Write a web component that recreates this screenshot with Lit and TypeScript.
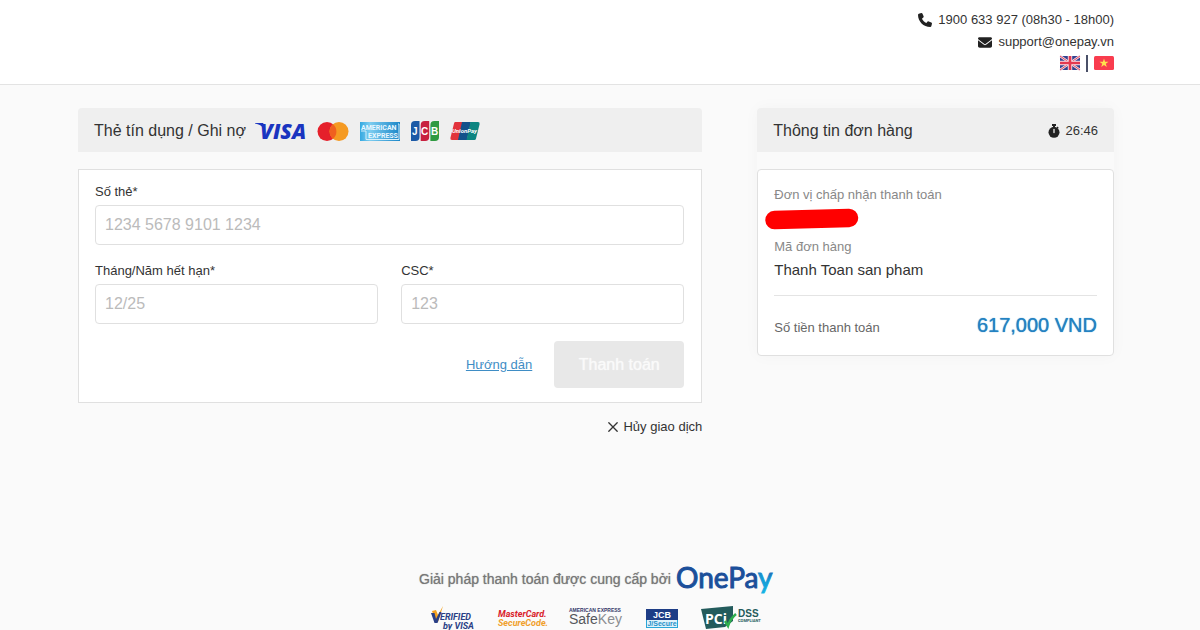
import { LitElement, html, css } from "lit";
import { customElement, property } from "lit/decorators.js";

const phoneIcon = html`<svg width="14" height="14" viewBox="0 0 512 512" aria-hidden="true"><path fill="#222" d="M164.900 24.600c-7.700-18.600-28-28.500-47.400-23.200l-88 24C12.100 30.200 0 46 0 64c0 247.400 200.600 448 448 448 18 0 33.800-12.100 38.600-29.500l24-88c5.300-19.400-4.600-39.700-23.200-47.400l-96-40c-16.300-6.800-35.200-2.100-46.300 11.600L304.700 368C234.300 334.700 177.300 277.700 144 207.300l49.300-40.300c13.700-11.200 18.400-30 11.600-46.300z"/></svg>`;

const mailIcon = html`<svg width="14" height="11" viewBox="0 0 512 384" aria-hidden="true"><path fill="#222" d="M48 0C21.500 0 0 21.500 0 48c0 15.100 7.100 29.300 19.200 38.400l217.600 163.200c11.400 8.500 27 8.500 38.400 0L492.800 86.400C504.900 77.300 512 63.100 512 48c0-26.500-21.500-48-48-48zM0 112v208c0 35.300 28.700 64 64 64h384c35.300 0 64-28.700 64-64V112L294.400 275.200c-22.800 17.100-54 17.100-76.800 0z"/></svg>`;

const watchIcon = html`<svg width="12" height="14" viewBox="0 0 12 14" aria-hidden="true"><path fill="#222" d="M4 0h4v2H7v1h-2V2H4zM9.500 2.600l1.200 1.200-1 1-1.200-1.200z"/><circle cx="6" cy="8.300" r="5.500" fill="#222"/><path stroke="#eee" stroke-width="1.300" stroke-linecap="round" d="M6 5.500v3"/></svg>`;

const closeIcon = html`<svg width="10" height="10" viewBox="0 0 10 10" aria-hidden="true"><path stroke="#333" stroke-width="1.300" stroke-linecap="round" d="M.8.800l8.400 8.400M9.200.800L.8 9.200"/></svg>`;

const ukFlag = html`<svg width="20" height="14" viewBox="0 0 20 14" aria-hidden="true">
  <rect width="20" height="14" rx="1" fill="#34418f"/>
  <path d="M0 0l20 14M20 0L0 14" stroke="#f3dfe8" stroke-width="2.400"/>
  <path d="M0 0l20 14M20 0L0 14" stroke="#e5485d" stroke-width="1"/>
  <path d="M10 0v14M0 7h20" stroke="#f6e4ec" stroke-width="4.400"/>
  <path d="M10 0v14M0 7h20" stroke="#e5374f" stroke-width="2.600"/>
</svg>`;

const vnFlag = html`<svg width="20" height="14" viewBox="0 0 20 14" aria-hidden="true">
  <rect width="20" height="14" rx="1.500" fill="#f93c4e"/>
  <path fill="#ffe04d" d="M10 2.500l1.100 3.300h3.400l-2.700 2 1 3.300L10 9.100l-2.800 2 1-3.300-2.700-2h3.400z"/>
</svg>`;

const cardBrands = [
  html`<svg width="49" height="20" viewBox="0 0 49 20" role="img" aria-label="Visa">
    <path fill="#1a34c0" d="M-2 2h8l2 3L7 8C5 5 2 3 -2 2.500z"/>
    <text class="visa" x="3" y="18">VISA</text>
  </svg>`,
  html`<svg width="32" height="20" viewBox="0 0 32 20" role="img" aria-label="Mastercard">
    <circle cx="10" cy="10.500" r="9.500" fill="#e5202b"/><circle cx="22" cy="10.500" r="9.500" fill="#f59a22"/>
    <path fill="#f0601f" d="M16 3.200a9.500 9.500 0 0 1 0 14.600a9.500 9.500 0 0 1 0-14.600z"/>
  </svg>`,
  html`<svg width="40" height="20" viewBox="0 0 40 20" role="img" aria-label="American Express">
    <defs><linearGradient id="amex" x1="0" y1="0" x2="1" y2="0"><stop offset="0" stop-color="#35a8e0"/><stop offset=".25" stop-color="#7dcdf0"/><stop offset="1" stop-color="#1b86c8"/></linearGradient></defs>
    <rect y="1" width="40" height="19" fill="url(#amex)"/>
    <path fill="none" stroke="#d6effa" d="M1 10h5v8.500h33V3h-1"/>
    <text class="amex" x="1" y="9">AMERICAN</text><text class="amex" x="8" y="17">EXPRESS</text>
  </svg>`,
  html`<svg width="28" height="20" viewBox="0 0 28 20" role="img" aria-label="JCB">
    <path fill="#1c5aa6" d="M4 0h4.500v16a4 4 0 0 1-4 4H0V4a4 4 0 0 1 4-4z"/>
    <path fill="#c8203f" d="M13.700 0h4.500v16a4 4 0 0 1-4 4H9.700V4a4 4 0 0 1 4-4z"/>
    <path fill="#2f9a41" d="M23.400 0H28v16a4 4 0 0 1-4 4h-4.600V4a4 4 0 0 1 4-4z"/>
    <text class="jcb" x="1" y="14">J</text><text class="jcb" x="10" y="14">C</text><text class="jcb" x="20" y="14">B</text>
  </svg>`,
  html`<svg width="30" height="20" viewBox="0 0 30 20" role="img" aria-label="UnionPay">
    <path fill="#e2333c" d="M5 1h9l-4 18H2q-2 0-1.600-2L4 2.500Q4.300 1 5 1z"/>
    <path fill="#12518b" d="M12 1h9l-4 18H8z"/>
    <path fill="#0c8581" d="M20.500 1H28q2 0 1.600 2L26 17.500q-.4 1.500-1.500 1.500h-8z"/>
    <text class="union" x="2" y="12">UnionPay</text>
  </svg>`,
];

const onePayLogo = html`<svg width="97" height="34" viewBox="0 0 97 34" role="img" aria-label="OnePay">
  <defs><linearGradient id="tail" gradientUnits="userSpaceOnUse" x1="82" y1="31" x2="94" y2="9"><stop offset="0" stop-color="#14b8e8"/><stop offset=".6" stop-color="#149ad4"/><stop offset="1" stop-color="#1b6fb8"/></linearGradient></defs>
  <text class="onepay" x="0" y="26">OnePa<tspan class="tail">y</tspan></text>
</svg>`;

const securityLogos = [
  html`<svg width="44" height="24" viewBox="0 0 44 24" role="img" aria-label="Verified by Visa">
    <path fill="#f4a11f" d="M1 5l4-1 2 5L12 0 7 16H5z"/>
    <path fill="#2a3f86" d="M0 7h3.500l1.500 6 3.500-7h2L6.500 17H3.500z"/>
    <text class="verified" x="9" y="14">ERIFIED</text><text class="verified" x="12" y="23">by VISA</text>
  </svg>`,
  html`<svg width="48" height="24" viewBox="0 0 48 24" role="img" aria-label="MasterCard SecureCode">
    <text class="mc red" x="0" y="11">MasterCard.</text><text class="mc gold" x="0" y="20">SecureCode.</text>
  </svg>`,
  html`<svg width="54" height="24" viewBox="0 0 54 24" role="img" aria-label="American Express SafeKey">
    <text class="tiny" x="0" y="6">AMERICAN EXPRESS</text>
    <text class="safekey" x="0" y="18">Safe<tspan fill="#8b8d91">Key</tspan></text>
  </svg>`,
  html`<svg width="32" height="24" viewBox="0 0 32 24" role="img" aria-label="JCB J/Secure">
    <rect y="3" width="32" height="19" fill="#2aa6d8"/><rect y="3" width="32" height="11" fill="#1e3d86"/><rect x="1" y="14" width="30" height="7" fill="#dff3fb"/>
    <text class="jcb-title" x="16" y="12" text-anchor="middle">JCB</text><text class="jsecure" x="16" y="20" text-anchor="middle">J/Secure</text>
  </svg>`,
  html`<svg width="60" height="24" viewBox="0 0 60 24" role="img" aria-label="PCI DSS compliant">
    <path fill="#235b5c" d="M0 3l32-3v15l-8 6-19 2z"/>
    <text class="pci" x="4" y="18">PCi</text>
    <path d="M24 15l3 5Q29 13 35 8" fill="none" stroke="#2fae4d" stroke-width="2.500"/>
    <text class="dss" x="37" y="11">DSS</text><text class="compliant" x="37" y="16">COMPLIANT</text>
  </svg>`,
];

@customElement("pay-field")
class PayField extends LitElement {
  static styles = css`
    :host { display: block; flex: 1; min-width: 0; }
    .label { display: block; margin-bottom: 3px; padding-top: 1px; font-size: 13px; line-height: 20px; color: #333; }
    .input { box-sizing: border-box; display: block; width: 100%; height: 40px; padding: 0 9px; border: 1px solid #e0e0e0; border-radius: 4px; background: #fff; color: #333; font: 16px "Liberation Sans", Arial, sans-serif; }
    .input::placeholder { color: #bbb; opacity: 1; }
  `;
  @property() label = "";
  @property() hint = "";
  render() {
    return html`<label class="label" for="field">${this.label}</label>
      <input class="input" id="field" type="text" inputmode="numeric" placeholder=${this.hint} />`;
  }
}

@customElement("app-root")
class AppRoot extends LitElement {
  static styles = css`
    :host { display: flex; flex-direction: column; min-height: 100vh; background: #fafafa; color: #333; font: 13px/20px "Liberation Sans", Arial, sans-serif; }
    svg { display: block; flex: none; overflow: visible; }
    .top { padding: 0 8px 0 0; background: #fff; border-bottom: 1px solid #e3e3e3; }
    .wrap { box-sizing: border-box; width: 100%; max-width: 1036px; margin: 0 auto; }
    .contact { display: flex; flex-direction: column; align-items: flex-end; gap: 2px; padding: 10px 0 12px; }
    .line { display: flex; align-items: center; gap: 6px; color: #333; text-decoration: none; }
    .langs { display: flex; align-items: center; gap: 6px; height: 18px; }
    .lang { padding: 0; border: 0; background: none; }
    .bar { width: 2px; height: 17px; background: #4a5068; }
    .main { flex: 1; padding: 23px 8px 24px 0; }
    .columns { display: grid; grid-template-columns: minmax(0, 7fr) minmax(0, 4fr); gap: 55px; align-items: start; }
    .heading { display: flex; align-items: center; gap: 11px; box-sizing: border-box; height: 44px; margin-bottom: 17px; padding: 2px 16px 0; border-radius: 4px 4px 0 0; background: #efefef; }
    .title { margin: 0; font-size: 16px; font-weight: 400; }
    .timer { display: flex; align-items: center; gap: 5px; margin-left: auto; }
    .card { padding: 11px 17px 14px 16px; border: 1px solid #e0e0e0; background: #fff; }
    .form { display: flex; flex-direction: column; gap: 15px; margin: 0; }
    .pair { display: flex; gap: 23px; }
    .actions { display: flex; justify-content: flex-end; align-items: center; gap: 22px; padding-top: 2px; }
    .guide { color: #3f8dc5; }
    .pay { width: 130px; height: 47px; border: 0; border-radius: 4px; background: #e8e8e8; color: #fafafa; font: 16px "Liberation Sans", Arial, sans-serif; text-shadow: 0 0 1px #fafafa; }
    .cancel { display: flex; align-items: center; gap: 5px; margin: 14px 0 0 auto; padding: 0; border: 0; background: none; color: #333; font: 13px/20px "Liberation Sans", Arial, sans-serif; }
    .order { border-radius: 4px; box-shadow: 0 0 16px rgba(0, 0, 0, 0.03); }
    .summary { padding: 15px 16px; border-radius: 4px; }
    .muted { margin: 0; color: #888; }
    .merchant { margin: 3px 0 7px -10px; }
    .item { margin: 3px 0 0; padding-bottom: 15px; border-bottom: 1px solid #e4e4e4; font-size: 15px; }
    .total { display: flex; justify-content: space-between; align-items: baseline; padding: 17px 0 2px; color: #666; }
    .amount { color: #2482c2; font-size: 20px; line-height: 24px; text-shadow: 0 0 1px #2482c2; }
    .footer { display: flex; flex-direction: column; align-items: center; gap: 10px; padding-right: 8px; }
    .provider { display: flex; align-items: center; gap: 5px; color: #777; font-size: 14px; text-shadow: 0 0 1px #999; }
    .badges { display: flex; gap: 23px; }

    .visa { font: italic 800 21px "Open Sans", sans-serif; fill: #1a34c0; }
    .amex { font: 700 7px Roboto, sans-serif; fill: #e9f7ff; }
    .jcb { font: 700 10px "Liberation Sans", sans-serif; fill: #fff; }
    .union { font: italic 700 6px Roboto, sans-serif; fill: #fff; }
    .onepay { font: 400 28px Lato, sans-serif; fill: #1b4f9a; stroke: #1b4f9a; stroke-width: 1px; text-shadow: none; }
    .tail { fill: url(#tail); stroke: url(#tail); }
    .verified { font: italic 700 9px Roboto, sans-serif; fill: #2a3f86; }
    .mc { font: italic 700 9px Roboto, sans-serif; }
    .red { fill: #d9222a; }
    .gold { fill: #f0a02c; }
    .tiny { font: 700 5px "Liberation Sans", sans-serif; fill: #34386a; }
    .safekey { font: 14px "Liberation Sans", sans-serif; fill: #55575c; }
    .jcb-title { font: 700 9px "Liberation Sans", sans-serif; fill: #fff; }
    .jsecure { font: 700 7px "Liberation Sans", sans-serif; fill: #2590c8; }
    .pci { font: 700 14px "Open Sans", sans-serif; fill: #fff; }
    .dss { font: 700 10px "Liberation Sans", sans-serif; fill: #235b5c; }
    .compliant { font: 700 4px Roboto, sans-serif; fill: #235b5c; }
    @media (max-width: 800px) {
      .columns { grid-template-columns: minmax(0, 1fr); gap: 24px; }
    }
  `;

  render() {
    return html`
      <header class="top">
        <div class="wrap contact">
          <a class="line" href="tel:1900633927">${phoneIcon}1900 633 927 (08h30 - 18h00)</a>
          <a class="line" href="mailto:support@onepay.vn">${mailIcon}support@onepay.vn</a>
          <div class="langs">
            <button class="lang" aria-label="English">${ukFlag}</button>
            <span class="bar"></span>
            <button class="lang" aria-label="Tiếng Việt">${vnFlag}</button>
          </div>
        </div>
      </header>
      <main class="main">
        <div class="wrap columns">
          <section>
            <div class="heading"><h1 class="title">Thẻ tín dụng / Ghi nợ</h1>${cardBrands}</div>
            <div class="card">
              <form class="form">
                <pay-field label="Số thẻ*" hint="1234 5678 9101 1234"></pay-field>
                <div class="pair">
                  <pay-field label="Tháng/Năm hết hạn*" hint="12/25"></pay-field>
                  <pay-field label="CSC*" hint="123"></pay-field>
                </div>
                <div class="actions">
                  <a class="guide" href="#guide">Hướng dẫn</a>
                  <button class="pay" type="button" disabled>Thanh toán</button>
                </div>
              </form>
            </div>
            <button class="cancel" type="button">${closeIcon}Hủy giao dịch</button>
          </section>
          <section class="order">
            <div class="heading"><h2 class="title">Thông tin đơn hàng</h2><span class="timer">${watchIcon}26:46</span></div>
            <div class="card summary">
              <p class="muted">Đơn vị chấp nhận thanh toán</p>
              <svg class="merchant" width="96" height="22" viewBox="0 0 96 22" aria-hidden="true"><path d="M10.500 12L85 10" stroke="#f00" stroke-width="18.500" stroke-linecap="round"/></svg>
              <p class="muted">Mã đơn hàng</p>
              <p class="item">Thanh Toan san pham</p>
              <div class="total"><span>Số tiền thanh toán</span><span class="amount">617,000 VND</span></div>
            </div>
          </section>
        </div>
      </main>
      <footer class="footer">
        <div class="provider">Giải pháp thanh toán được cung cấp bởi ${onePayLogo}</div>
        <div class="badges">${securityLogos}</div>
      </footer>
    `;
  }
}
